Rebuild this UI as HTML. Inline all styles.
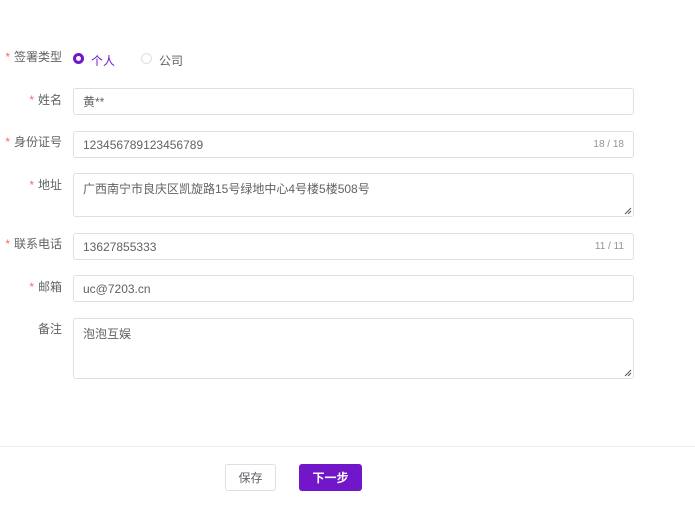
<!DOCTYPE html>
<html><head><meta charset="utf-8"><style>
*{box-sizing:border-box;margin:0;padding:0}
body{width:695px;height:515px;background:#fff;font-family:"Liberation Sans","Noto Sans CJK SC",sans-serif;font-size:12px;color:#606266;position:relative;overflow:hidden}
.lbl{position:absolute;right:633px;text-align:right;white-space:nowrap;color:#606266;font-size:12px}
.lbl b{color:#f56c6c;font-weight:normal;margin-right:4px}
.in{position:absolute;left:73px;width:561px;border:1px solid #dcdfe6;border-radius:3px;padding:0 9px;color:#606266;font-size:12px;display:flex;align-items:center}
.ta{align-items:flex-start;padding-top:6px}
.cnt{position:absolute;right:9px;font-size:10px;color:#909399}
.grip{position:absolute;right:1px;bottom:1px;width:8px;height:8px}
.btn{position:absolute;top:464px;height:27px;border-radius:3px;display:flex;align-items:center;justify-content:center;font-size:12px}
</style></head><body>
<div class="lbl" style="top:48px;right:633px"><b>*</b>签署类型</div>
<div style="position:absolute;left:73px;top:53px;width:11px;height:11px;border-radius:50%;border:3px solid #7216c9;background:#fff"></div>
<div style="position:absolute;left:91px;top:52px;color:#7216c9">个人</div>
<div style="position:absolute;left:141px;top:53px;width:11px;height:11px;border-radius:50%;border:1px solid #dcdfe6"></div>
<div style="position:absolute;left:159px;top:52px;color:#606266">公司</div>

<div class="lbl" style="top:91px"><b>*</b>姓名</div>
<div class="in" style="top:88px;height:27px">黄**</div>

<div class="lbl" style="top:133px"><b>*</b>身份证号</div>
<div class="in" style="top:131px;height:27px">123456789123456789<span class="cnt">18 / 18</span></div>

<div class="lbl" style="top:176px"><b>*</b>地址</div>
<div class="in ta" style="top:173px;height:44px">广西南宁市良庆区凯旋路15号绿地中心4号楼5楼508号<svg class="grip" viewBox="0 0 8 8"><path d="M7 1L1 7M7 4L4 7" stroke="#555" stroke-width="1"/></svg></div>

<div class="lbl" style="top:235px"><b>*</b>联系电话</div>
<div class="in" style="top:233px;height:27px">13627855333<span class="cnt">11 / 11</span></div>

<div class="lbl" style="top:278px"><b>*</b>邮箱</div>
<div class="in" style="top:275px;height:27px">uc@7203.cn</div>

<div class="lbl" style="top:320px">备注</div>
<div class="in ta" style="top:318px;height:61px">泡泡互娱<svg class="grip" viewBox="0 0 8 8"><path d="M7 1L1 7M7 4L4 7" stroke="#555" stroke-width="1"/></svg></div>

<div style="position:absolute;left:0;top:446px;width:695px;height:1px;background:#ebeef5"></div>
<div class="btn" style="left:225px;width:51px;border:1px solid #dcdfe6;color:#606266">保存</div>
<div class="btn" style="left:299px;width:63px;background:#7216c9;color:#fff;font-weight:bold">下一步</div>
</body></html>
